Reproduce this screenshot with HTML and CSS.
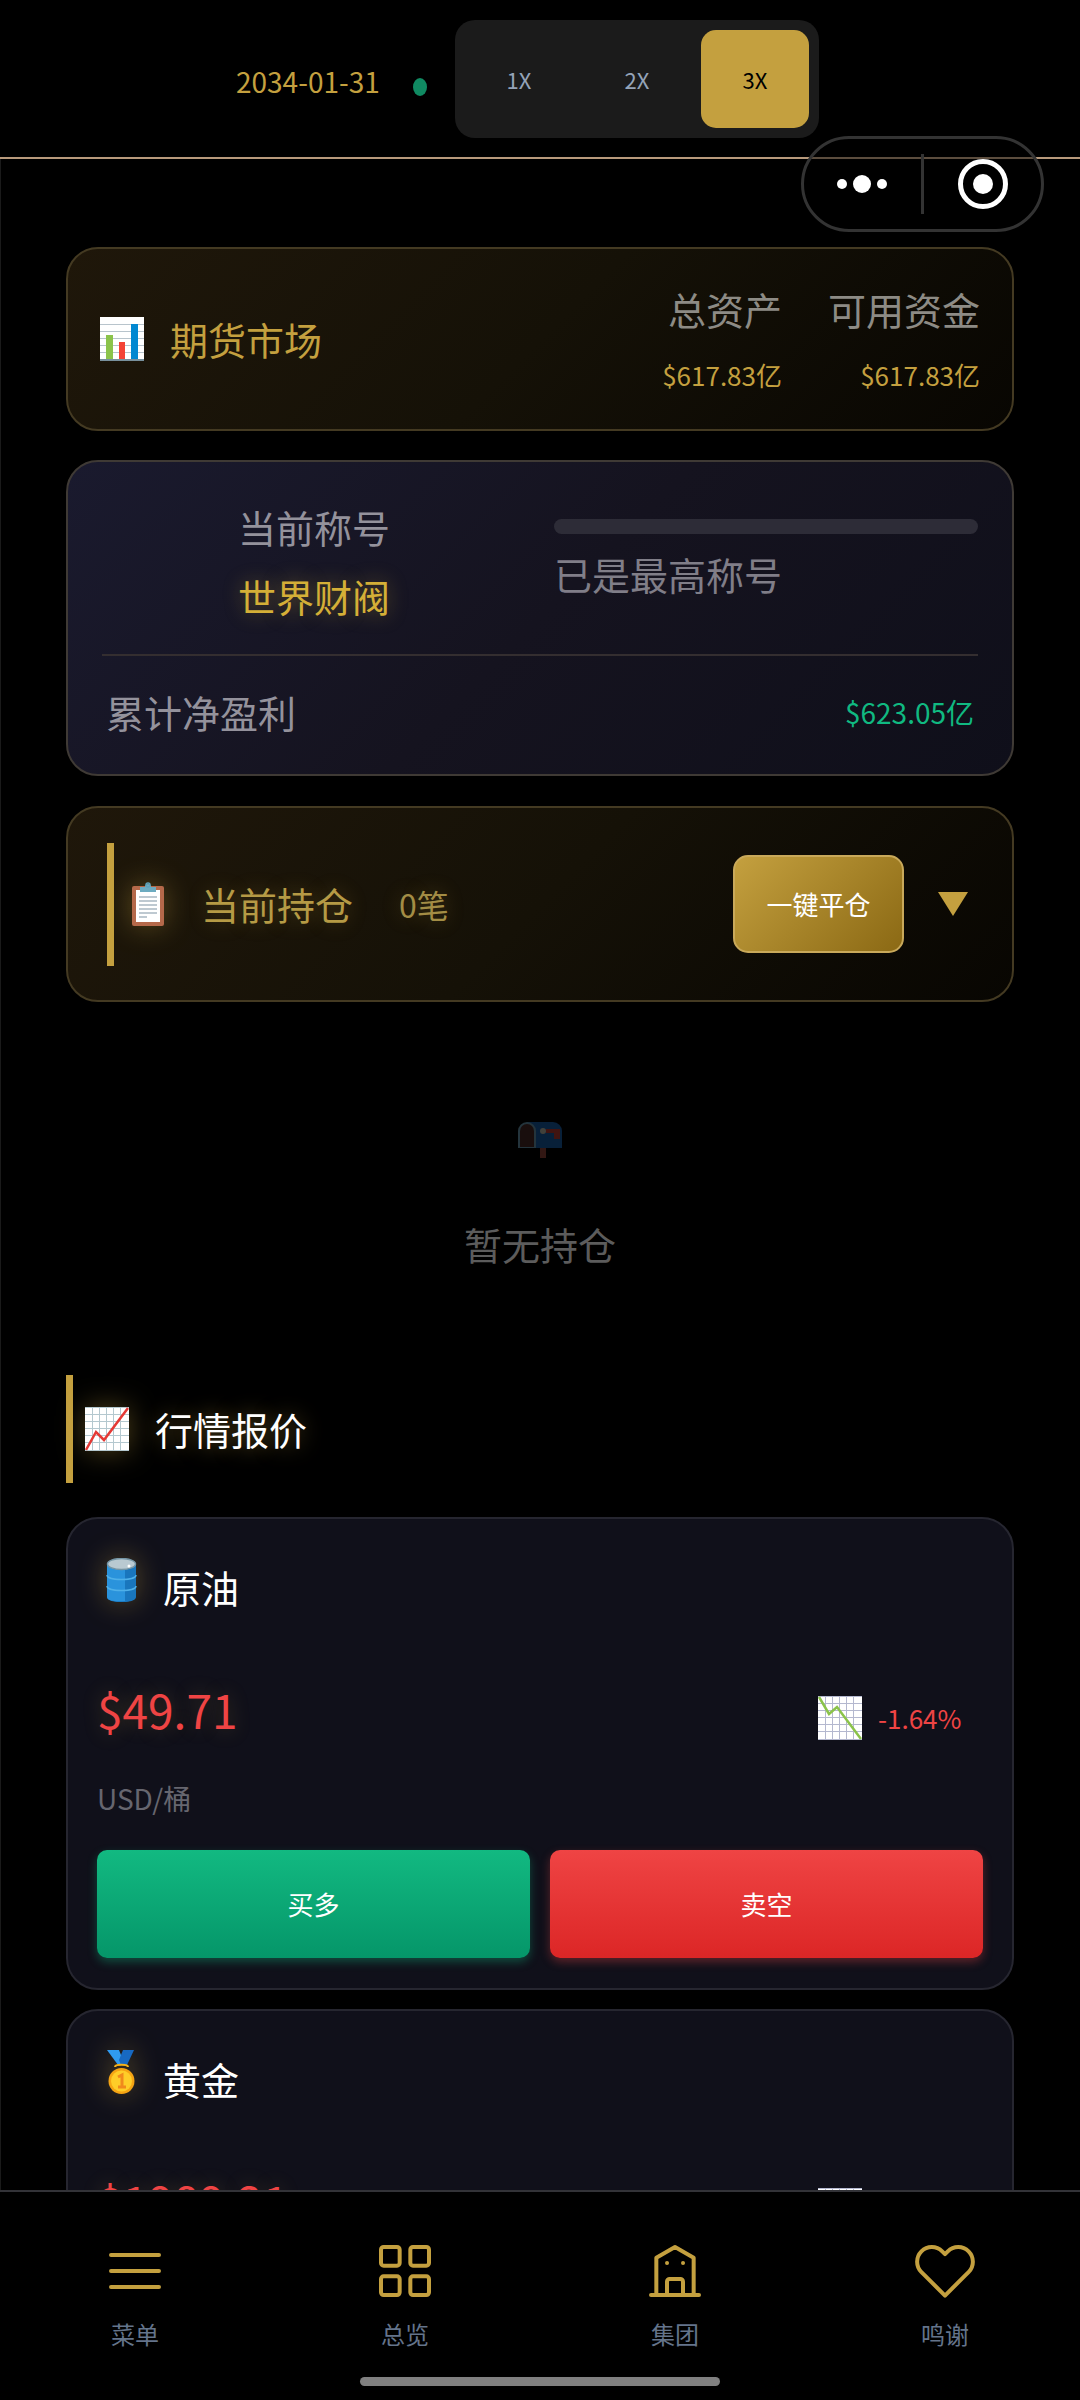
FILE: index.html
```html
<!DOCTYPE html>
<html lang="zh-CN">
<head>
<meta charset="utf-8">
<meta name="viewport" content="width=device-width, initial-scale=1">
<title>期货市场</title>
<link rel="stylesheet" href="styles.css">
</head>
<body>
<header class="topbar">
  <time class="date" datetime="2034-01-31">2034-01-31</time>
  <span class="status"></span>
  <div class="speed">
    <button class="speed-btn" type="button">1X</button>
    <button class="speed-btn" type="button">2X</button>
    <button class="speed-btn active" type="button">3X</button>
  </div>
</header>

<div class="capsule">
  <button class="capsule-btn" type="button" aria-label="更多">
    <svg width="56" height="20" viewBox="0 0 56 20" fill="#fff"><circle cx="7" cy="10" r="5"/><circle cx="27" cy="10" r="9"/><circle cx="47" cy="10" r="5"/></svg>
  </button>
  <span class="capsule-line"></span>
  <button class="capsule-btn" type="button" aria-label="关闭">
    <svg width="50" height="50" viewBox="0 0 50 50"><circle cx="25" cy="25" r="22.500" fill="none" stroke="#fff" stroke-width="5"/><circle cx="25" cy="25" r="10" fill="#fff"/></svg>
  </button>
</div>

<main class="content">
  <section class="card gold summary">
    <svg class="emoji" viewBox="0 0 44 44"><path fill="#fff" d="M0 0h44v44H0z"/><path stroke="#b8c4cc" d="M0 7.500h44M0 14.500h44M0 21.500h44M0 28.500h44M0 35.500h44"/><path fill="#8bc34a" d="M6 18h7v25H6z"/><path fill="#f44336" d="M19 25h6v18h-6z"/><path fill="#0288d1" d="M31 7h7v36h-7z"/><path fill="#78909c" d="M0 42h44v2H0z"/></svg>
    <h1 class="title">期货市场</h1>
    <dl class="assets">
      <div class="asset"><dt>总资产</dt><dd>$617.83亿</dd></div>
      <div class="asset"><dt>可用资金</dt><dd>$617.83亿</dd></div>
    </dl>
  </section>

  <section class="card rank">
    <div class="rank-top">
      <div class="rank-name">
        <span class="muted">当前称号</span>
        <strong class="rank-title">世界财阀</strong>
      </div>
      <div class="rank-progress">
        <div class="bar"></div>
        <span class="muted dim">已是最高称号</span>
      </div>
    </div>
    <div class="rank-bottom">
      <span class="muted">累计净盈利</span>
      <span class="profit">$623.05亿</span>
    </div>
  </section>

  <section class="card gold holdings">
    <h2 class="holdings-head">
      <svg class="emoji glow" viewBox="0 0 44 44"><rect x="6" y="4" width="32" height="40" rx="2" fill="#b5694a"/><path fill="#fff" d="M10 8h24v32H10z"/><path stroke="#a9b8c2" stroke-width="1.500" d="M13 15h18M13 19h18M13 23h18M13 27h18M13 31h18M13 35h8"/><path fill="#6cabc0" d="M14 5h5a3 3 0 0 1 6 0h5v5H14z"/><circle cx="22" cy="3" r="2" fill="none" stroke="#5fa3bb" stroke-width="1.500"/></svg>
      <span>当前持仓</span>
      <small class="count">0笔</small>
    </h2>
    <button class="close-all" type="button">一键平仓</button>
    <button class="toggle" type="button" aria-label="展开"><svg width="30" height="24" viewBox="0 0 30 24"><path fill="#c4a03f" d="M0 0h30L15 24z"/></svg></button>
  </section>

  <section class="empty">
    <svg class="emoji faded" viewBox="0 0 44 44"><path fill="#16508f" d="M9 3h26a9 9 0 0 1 9 9v17H9z"/><path fill="#5b8396" d="M0 29V12a9 9 0 0 1 18 0v17z"/><path fill="#3f2521" d="M2 28V12a7 7 0 0 1 14 0v16z"/><path fill="#a3342c" d="M28 10h14v10h-6v-6h-8z"/><circle cx="25" cy="12" r="3" fill="#a5a493"/><path fill="#7d3b31" d="M22 29h6v10h-6z"/></svg>
    <p>暂无持仓</p>
  </section>

  <h2 class="section-head">
    <svg class="emoji glow" viewBox="0 0 44 44"><path fill="#fff" d="M0 0h44v44H0z"/><path stroke="#b4c8cf" d="M7.500 0v44M14.500 0v44M21.500 0v44M28.500 0v44M35.500 0v44M0 7.500h44M0 14.500h44M0 21.500h44M0 28.500h44M0 35.500h44M0 .500h44M0 43.500h44"/><path fill="none" stroke="#e53935" stroke-width="2.500" d="m1 43 10-18 8 8L43 1"/></svg>
    <span>行情报价</span>
  </h2>

  <article class="card quote">
    <h3 class="quote-name">
      <svg class="emoji glow" viewBox="0 0 44 44"><path fill="#1976bd" d="M8 6h29v33c0 7-29 7-29 0z"/><path fill="#2a93dc" d="M8 6h18v37c-8 1-18 0-18-4z"/><path fill="none" stroke="#4fb0e8" stroke-width="1.500" d="M8 17c0 6 29 6 29 0M8 28c0 6 29 6 29 0"/><ellipse cx="22.500" cy="6" rx="14" ry="5.500" fill="#b9c9d1" stroke="#7595a5" stroke-width="1.500"/><circle cx="30" cy="8" r="1.500" fill="#fff"/></svg>
      <span>原油</span>
    </h3>
    <div class="quote-row">
      <span class="price">$49.71</span>
      <svg class="emoji" viewBox="0 0 44 44"><path fill="#fff" d="M0 0h44v44H0z"/><path stroke="#b4b8cf" d="M7.500 0v44M14.500 0v44M21.500 0v44M28.500 0v44M35.500 0v44M0 7.500h44M0 14.500h44M0 21.500h44M0 28.500h44M0 35.500h44M0 .500h44M0 43.500h44"/><path fill="none" stroke="#8bc34a" stroke-width="2.500" d="m1 1 10 17 8-7 24 32"/></svg>
      <span class="change">-1.64%</span>
    </div>
    <p class="unit">USD/桶</p>
    <div class="actions">
      <button class="trade buy" type="button">买多</button>
      <button class="trade sell" type="button">卖空</button>
    </div>
  </article>

  <article class="card quote">
    <h3 class="quote-name">
      <svg class="emoji glow" viewBox="0 0 44 44"><path fill="#2f9bf0" d="M8 0h12l6 15h-7z"/><path fill="#1769c2" d="M24 0h11l-7 15h-6l-2-5z"/><path fill="none" stroke="#f5b21a" stroke-width="2" d="M16 17c0-3 13-3 13 0"/><circle cx="22.500" cy="31" r="13" fill="#f5a414"/><circle cx="22.500" cy="31" r="10.500" fill="#ffcd28"/><path fill="none" stroke="#f08a1c" stroke-width="3" d="M19 27l4-2v12M19 37h8"/></svg>
      <span>黄金</span>
    </h3>
    <div class="quote-row">
      <span class="price">$1989.21</span>
      <svg class="emoji" viewBox="0 0 44 44"><path fill="#fff" d="M0 0h44v44H0z"/><path stroke="#b4b8cf" d="M7.500 0v44M14.500 0v44M21.500 0v44M28.500 0v44M35.500 0v44M0 7.500h44M0 14.500h44M0 21.500h44M0 28.500h44M0 35.500h44M0 .500h44M0 43.500h44"/></svg>
      <span class="change"></span>
    </div>
  </article>
</main>

<nav class="tabbar">
  <div class="tabs">
    <a class="tab" href="#menu"><svg class="tab-icon" viewBox="0 0 24 24"><path d="M3 6h18M3 12h18M3 18h18"/></svg>菜单</a>
    <a class="tab" href="#overview"><svg class="tab-icon" viewBox="0 0 24 24"><rect x="3" y="3" width="7" height="7" rx="1"/><rect x="14" y="3" width="7" height="7" rx="1"/><rect x="3" y="14" width="7" height="7" rx="1"/><rect x="14" y="14" width="7" height="7" rx="1"/></svg>总览</a>
    <a class="tab" href="#group"><svg class="tab-icon" viewBox="0 0 24 24"><path d="M3 21h18M5 21V7l7-4 7 4v14M9 21v-5a1 1 0 0 1 1-1h4a1 1 0 0 1 1 1v5M9 9h.01M15 9h.01"/></svg>集团</a>
    <a class="tab" href="#thanks"><svg class="tab-icon" viewBox="0 0 24 24"><path d="M20.840 4.610a5.500 5.500 0 0 0-7.780 0L12 5.670l-1.060-1.060a5.500 5.500 0 0 0-7.780 7.780l1.060 1.060L12 21.230l7.780-7.780 1.060-1.060a5.500 5.500 0 0 0 0-7.780z"/></svg>鸣谢</a>
  </div>
  <div class="home-indicator"></div>
</nav>
</body>
</html>
```
FILE: styles.css
```css
* { box-sizing: border-box; margin: 0; padding: 0; }

:root {
  --gold: #c4a03f;
  --red: #ef4444;
  --green: #10b981;
}

body {
  display: flex;
  flex-direction: column;
  height: 100vh;
  overflow: hidden;
  background: #000;
  color: #fff;
  font-family: "Noto Sans CJK SC", sans-serif;
  font-size: 38px;
  font-weight: 400;
  line-height: 44px;
}

button { border: 0; background: none; color: inherit; font: inherit; cursor: pointer; }
h1, h2, h3, strong, small { font-size: inherit; font-weight: inherit; }
svg { display: block; flex: none; }
a { text-decoration: none; }

.emoji { width: 44px; height: 44px; }
.glow { filter: drop-shadow(0 0 14px rgba(196, 160, 63, .4)); }

.topbar {
  display: flex;
  flex: none;
  align-items: center;
  padding: 20px 261px 19px 236px;
  border-bottom: 2px solid #b89a7c;
}
.date { padding-top: 4px; color: var(--gold); font-size: 28px; line-height: 32px; }
.status { width: 14px; height: 18px; margin: 16px 28px 0 auto; border-radius: 50%; background: #108a62; }
.speed { display: flex; gap: 10px; padding: 10px; border-radius: 20px; background: #1b1b1b; }
.speed-btn { width: 108px; height: 98px; border-radius: 15px; color: #94a3b8; font-size: 22px; }
.speed-btn.active { background: var(--gold); color: #000; }

.capsule {
  position: fixed;
  top: 136px;
  right: 36px;
  display: flex;
  align-items: center;
  width: 243px;
  height: 96px;
  border: 3px solid #333;
  border-radius: 48px;
  background: rgba(0, 0, 0, .5);
}
.capsule-btn { display: grid; flex: 1; place-items: center; }
.capsule-line { width: 3px; height: 60px; background: #333; }

.content {
  flex: 1;
  min-height: 0;
  padding: 88px 66px 0 65px;
  overflow: hidden;
  border-left: 1px solid #1a1a1a;
}

.card { border: 2px solid #262630; border-radius: 32px; background: #10101a; }
.card.gold { border-color: #443a22; background: linear-gradient(135deg, #1f170a, #151107 50%, #080602); }

.summary { display: flex; align-items: center; height: 184px; padding: 0 32px; }
.title { margin-left: 26px; color: var(--gold); }
.assets { display: flex; gap: 46px; margin-left: auto; padding-top: 6px; text-align: right; }
.asset dt { color: #8d8b85; }
.asset dd { margin-top: 22px; color: var(--gold); font-size: 26px; }

.rank {
  margin-top: 29px;
  padding: 43px 34px 40px;
  border-color: #3f3a35;
  background: linear-gradient(135deg, #1a1a2e, #15131f 50%, #0f0f1a);
}
.rank-top { display: grid; grid-template-columns: 1fr 1fr; gap: 28px; padding-bottom: 36px; border-bottom: 2px solid #342e30; }
.rank-name { display: flex; flex-direction: column; gap: 25px; align-items: center; }
.muted { color: #94929c; }
.muted.dim { color: #807e88; }
.rank-title { color: #d4af37; text-shadow: 0 0 20px rgba(212, 175, 55, .4); }
.bar { height: 15px; margin: 14px 0 18px; border-radius: 8px; background: #2d2c37; }
.rank-bottom { display: flex; align-items: center; justify-content: space-between; padding: 34px 4px 0; }
.profit { color: var(--green); font-size: 28px; }

.holdings { display: flex; align-items: center; height: 196px; margin-top: 30px; padding: 0 44px 0 39px; }
.holdings-head,
.section-head { display: flex; align-items: center; border-left: 7px solid var(--gold); }
.holdings-head {
  height: 123px;
  padding-left: 12px;
  color: #b59a45;
  text-shadow: 0 0 20px rgba(196, 160, 63, .3);
}
.holdings-head span { margin-left: 31px; }
.section-head span { margin-left: 26px; }
.count { margin-left: 46px; color: #a38d45; font-size: 32px; }
.close-all {
  width: 171px;
  height: 98px;
  margin-left: auto;
  border: 2px solid #c9a95a;
  border-radius: 15px;
  background: linear-gradient(135deg, #c4a03f, #8b6914);
  font-size: 26px;
}
.toggle { margin-left: 34px; }

.empty { display: flex; flex-direction: column; align-items: center; padding: 117px 0 109px; color: #5c5c5c; }
.empty .faded { opacity: .4; }
.empty p { margin-top: 59px; }

.section-head { height: 108px; padding-left: 12px; text-shadow: 0 0 20px rgba(196, 160, 63, .5); }

.quote { padding: 39px 29px 30px; }
.section-head + .quote { margin-top: 34px; }
.quote + .quote { margin-top: 19px; }
.quote-name { display: flex; align-items: flex-start; padding-left: 2px; }
.quote-name span { margin: 7px 0 0 20px; }
.quote-row { display: flex; align-items: flex-end; margin-top: 69px; padding-right: 19px; }
.price { margin-right: auto; color: var(--red); font-size: 46px; line-height: 62px; text-shadow: 0 0 20px rgba(196, 160, 63, .3); }
.change { min-width: 86px; margin-left: 16px; color: var(--red); font-size: 26px; }
.unit { margin-top: 36px; color: #66666f; font-size: 28px; }
.actions { display: grid; grid-template-columns: 1fr 1fr; gap: 20px; margin-top: 30px; }
.trade { height: 108px; border-radius: 10px; font-size: 26px; }
.buy { background: linear-gradient(#12b981, #059669); box-shadow: 0 4px 10px rgba(16, 185, 129, .35); }
.sell { background: linear-gradient(#ef4444, #dc2626); box-shadow: 0 4px 10px rgba(239, 68, 68, .35); }

.tabbar { flex: none; padding: 47px 0 14px; border-top: 2px solid #333338; background: #000; }
.tabs { display: flex; }
.tab { display: flex; flex: 1; flex-direction: column; align-items: center; gap: 14px; color: #64748b; font-size: 24px; line-height: 34px; }
.tab-icon { width: 64px; height: 64px; fill: none; stroke: var(--gold); stroke-width: 1.5; stroke-linecap: round; stroke-linejoin: round; }
.home-indicator { width: 33.3%; height: 9px; margin: 26px auto 0; border-radius: 5px; background: #808080; }
```
